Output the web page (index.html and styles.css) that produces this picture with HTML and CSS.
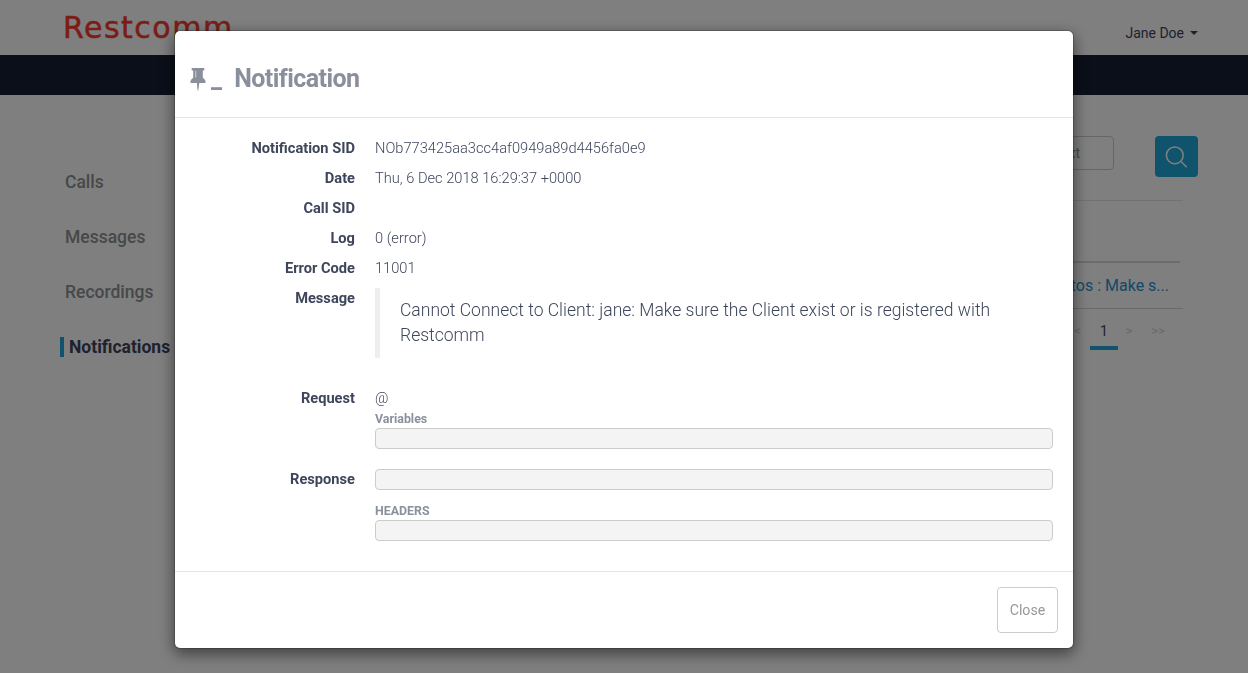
FILE: index.html
```html
<!DOCTYPE html>
<html lang="en">
<head>
<meta charset="utf-8">
<title>Restcomm - Notifications</title>
<link rel="stylesheet" href="styles.css">
</head>
<body>
<div class="page">
  <header class="topbar">
    <div class="logo">Restcomm</div>
    <div class="user">Jane Doe <span class="caret"></span></div>
  </header>
  <div class="navband"></div>
  <div class="content">
    <nav class="sidebar">
      <a class="side-link">Calls</a>
      <a class="side-link">Messages</a>
      <a class="side-link">Recordings</a>
      <a class="side-link active">Notifications</a>
    </nav>
    <main class="main">
      <div class="filters">
        <div class="field">Error Text</div>
        <div class="search">
          <svg width="24" height="24" viewBox="0 0 24 24" fill="none" stroke="#fff" stroke-width="1.5"><circle cx="9.800" cy="10.300" r="8.400"/><path d="M15.800 16.300L21.800 22.300"/></svg>
        </div>
      </div>
      <div class="list">
        <div class="list-head"></div>
        <div class="list-row">tos : Make s...</div>
        <div class="pager"><span>&lt;</span><span class="current">1</span><span>&gt;</span><span class="last">&gt;&gt;</span></div>
      </div>
    </main>
  </div>
</div>
<div class="backdrop">
  <section class="modal">
    <header class="modal-header">
      <svg class="pin" width="16" height="23" viewBox="0 0 16 23"><path fill="#8a8f9c" d="M2.600 0h10.800q1.100 0 1.100 1.200t-1.100 1.300h-.6v7.200q2.900 1.500 2.900 4.600 0 .7-.7.7H9.300L8.300 22q-.1.500-.4.500t-.4-.5L6.900 15H1q-.7 0-.7-.7 0-3.100 2.900-4.600V2.500h-.6Q1.500 2.400 1.500 1.200T2.600 0z"/><path fill="#d5d7dc" d="M5.300 3h.9v6.500h-.9z"/></svg>
      <span class="underscore">_</span>
      <h3 class="title">Notification</h3>
    </header>
    <dl class="details">
      <dt>Notification SID</dt><dd>NOb773425aa3cc4af0949a89d4456fa0e9</dd>
      <dt>Date</dt><dd>Thu, 6 Dec 2018 16:29:37 +0000</dd>
      <dt>Call SID</dt><dd></dd>
      <dt>Log</dt><dd>0 (error)</dd>
      <dt>Error Code</dt><dd>11001</dd>
      <dt>Message</dt><dd><blockquote class="message">Cannot Connect to Client: jane: Make sure the Client exist or is registered with Restcomm</blockquote></dd>
      <dt>Request</dt><dd class="request">@<div class="label">Variables</div><div class="pre"></div></dd>
      <dt>Response</dt><dd><div class="pre"></div><div class="label headers">HEADERS</div><div class="pre"></div></dd>
    </dl>
    <footer class="modal-footer"><button class="close">Close</button></footer>
  </section>
</div>
</body>
</html>
```
FILE: styles.css
```css
* { box-sizing: border-box; }
body {
  margin: 0;
  height: 673px;
  overflow: hidden;
  background: #fff;
  color: #3e4259;
  font: 14px/20px Roboto, sans-serif;
}
.topbar {
  height: 55px;
  padding: 0 50px 0 63px;
  display: flex;
  justify-content: space-between;
}
.logo {
  padding-top: 8px;
  color: #f53a2f;
  font: 30px/40px "DejaVu Sans", sans-serif;
  letter-spacing: 1.5px;
  -webkit-text-stroke: .5px #f53a2f;
}
.user {
  display: flex;
  align-items: center;
  gap: 6px;
  padding-top: 11px;
  font-weight: 400;
}
.caret {
  border: 4px solid transparent;
  border-top-color: #3e4259;
  border-bottom: 0;
}
.navband { height: 40px; background: #161e33; }
.content { display: flex; }
.sidebar {
  width: 200px;
  padding: 77px 0 0 60px;
  display: flex;
  flex-direction: column;
  gap: 35px;
}
.side-link {
  padding-left: 5px;
  font-size: 17.5px;
  line-height: 20px;
  font-weight: 500;
  color: #8e9094;
}
.side-link.active {
  border-left: 4px solid #20a6d8;
  font-weight: 700;
  color: #3e4259;
}
.main { flex: 1; padding: 41px 50px 0 0; }
.filters { display: flex; justify-content: flex-end; align-items: flex-start; gap: 41px; }
.field {
  width: 140px;
  height: 34px;
  padding: 6px 33px;
  border: 1px solid #ccc;
  border-radius: 4px;
  color: #8e929c;
  text-align: right;
}
.search {
  width: 43px;
  height: 41px;
  display: flex;
  align-items: center;
  justify-content: center;
  border-radius: 4px;
  background: #20a6d8;
}
.list { margin: 23px 15px 0 0; border-top: 1px solid #e5e5e5; }
.list-head { height: 62px; margin-right: 3px; border-bottom: 2px solid #d8d8d8; }
.list-row {
  height: 46px;
  padding: 12px 14px 0 0;
  border-bottom: 1px solid #d5d5d5;
  color: #2a8fd0;
  font-size: 16px;
  line-height: 22px;
  text-align: right;
}
.pager {
  display: flex;
  justify-content: flex-end;
  padding: 12px 18px 0 0;
  color: #dcdcdc;
  font-size: 13px;
  font-weight: 700;
}
.pager .current {
  width: 28px;
  height: 29px;
  margin: 0 8px 0 9px;
  border-bottom: 4px solid #20a6d8;
  color: #3e4259;
  font-size: 14px;
  font-weight: 400;
  text-align: center;
}
.pager .last { margin-left: 19px; }
.backdrop {
  position: fixed;
  inset: 0;
  padding-top: 30px;
  background: rgba(0, 0, 0, .5);
}
.modal {
  width: 900px;
  height: 619px;
  margin: 0 auto;
  border: 1px solid rgba(0, 0, 0, .2);
  border-radius: 6px;
  background: #fff;
  background-clip: padding-box;
  box-shadow: 0 5px 15px rgba(0, 0, 0, .5);
}
.modal-header {
  height: 87px;
  padding: 10px 15px 0;
  display: flex;
  align-items: center;
  border-bottom: 1px solid #e5e5e5;
  color: #8a8f9c;
  font-size: 24px;
}
.underscore { margin-left: 5px; font-size: 25px; font-weight: 700; }
.title { margin: 0 0 0 12px; font-size: 25px; font-weight: 700; letter-spacing: -.55px; }
.details {
  height: 453px;
  margin: 0;
  padding: 20px 20px 0 20px;
  display: grid;
  grid-template-columns: 160px 1fr;
  grid-auto-rows: max-content;
  gap: 10px 20px;
  color: #3e465c;
  font-size: 14.65px;
}
dt { text-align: right; font-weight: 700; }
dd { margin: 0; min-height: 20px; font-weight: 300; }
.message {
  margin: 0 0 20px;
  padding: 10px 20px;
  border-left: 5px solid #eee;
  font-size: 17.53px;
  line-height: 25px;
}
.request { padding-bottom: 10px; }
.label { padding-top: 1px; height: 20px; color: #8a919c; font-size: 12.4px; line-height: 19px; font-weight: 700; }
.headers { margin-top: 10px; }
.pre {
  height: 21px;
  border: 1px solid #ccc;
  border-radius: 4px;
  background: #f4f4f4;
}
.modal-footer {
  height: 77px;
  padding: 15px;
  display: flex;
  justify-content: flex-end;
  border-top: 1px solid #e5e5e5;
}
.close {
  width: 61px;
  height: 46px;
  padding: 0;
  border: 1px solid #ccc;
  border-radius: 4px;
  background: #fff;
  color: #999;
  font: 400 14.2px/20px Roboto, sans-serif;
}
```
